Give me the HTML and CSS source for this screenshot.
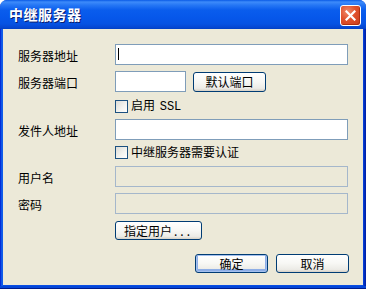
FILE: index.html
```html
<!DOCTYPE html>
<html lang="zh-CN">
<head>
<meta charset="UTF-8">
<title>中继服务器</title>
<link rel="stylesheet" href="styles.css">
</head>
<body>
<div class="window">
  <div class="titlebar">
    <span class="title">中继服务器</span>
    <button class="close" aria-label="关闭">
      <svg width="11" height="11" viewBox="0 0 11 11"><path d="M1.5 1.5 L9.5 9.5 M9.5 1.5 L1.5 9.5" stroke="#fff" stroke-width="2.2" stroke-linecap="square"/></svg>
    </button>
  </div>
  <div class="client">
    <div class="row">
      <label class="lbl">服务器地址</label>
      <div class="field wide"><span class="caret"></span></div>
    </div>
    <div class="row">
      <label class="lbl">服务器端口</label>
      <div class="field port"></div>
      <button class="btn btn-port">默认端口</button>
    </div>
    <div class="row check-row">
      <span class="box"></span><span class="check-text">启用 <span class="mono">SSL</span></span>
    </div>
    <div class="row">
      <label class="lbl">发件人地址</label>
      <div class="field wide"></div>
    </div>
    <div class="row check-row check-auth">
      <span class="box"></span><span class="check-text">中继服务器需要认证</span>
    </div>
    <div class="row">
      <label class="lbl">用户名</label>
      <div class="field wide disabled"></div>
    </div>
    <div class="row">
      <label class="lbl">密码</label>
      <div class="field wide disabled"></div>
    </div>
    <div class="row user-row">
      <button class="btn btn-user">指定用户<span class="dots">...</span></button>
    </div>
    <div class="actions">
      <button class="btn default">确定</button>
      <button class="btn">取消</button>
    </div>
  </div>
</div>
</body>
</html>
```

FILE: styles.css
```css
:root {
  --face: #ece9d8;
  --field-border: #7f9db9;
  --btn-border: #003c74;
  --ui-font: "Noto Sans CJK SC", "DejaVu Sans", sans-serif;
}
body { margin: 0; background: #fff; font-family: var(--ui-font); font-size: 12px; color: #000; }
.window {
  width: 366px; height: 289px; box-sizing: border-box;
  background: linear-gradient(90deg, #0019cf 0, #0841e0 1px, #166aee 2px, #0a4ee4 3px, #0a4ee4 calc(100% - 3px), #0030c8 calc(100% - 2px), #001ea0 100%);
  padding: 0 3px 4px 3px;
  display: flex; flex-direction: column;
  border-radius: 7px 7px 0 0;
  box-shadow: inset 0 -1px 0 #001b8c, inset 0 -3px 0 #0446d8;
}
.titlebar {
  height: 29px; margin: 0 -3px; padding: 0 5px 0 9px;
  display: flex; align-items: center; justify-content: space-between;
  border-radius: 7px 7px 0 0;
  background: linear-gradient(#0a5ae6 0, #3d8bfa 2px, #2677f5 5px, #0a5ded 10px, #0657ea 18px, #0652e2 24px, #0545cf 28px, #003fc0 29px);
}
.title { color: #fff; font-weight: bold; font-size: 14px; letter-spacing: 0.5px; text-shadow: 1px 1px 0 #0a1e6e; margin-top: -1px; }
.close {
  width: 21px; height: 21px; padding: 0; margin-top: 1px;
  border: 1px solid #fff; border-radius: 3px;
  background: radial-gradient(circle at 35% 30%, #f08a6a 0, #e0512c 45%, #c83c1c 100%);
  display: flex; align-items: center; justify-content: center;
  box-shadow: inset -1px -1px 0 #b03010;
}
.client { flex: 1; background: var(--face); padding: 15px 0 0 15px; display: flex; flex-direction: column; }
.row { display: flex; align-items: center; height: 21px; margin-bottom: 6px; }
.lbl { width: 97px; padding-top: 1px; }
.field { height: 21px; box-sizing: border-box; border: 1px solid var(--field-border); background: #fff; position: relative; }
.field.wide { width: 233px; }
.field.port { width: 71px; }
.field.disabled { background: var(--face); border-color: #a5b7cb; }
.caret { position: absolute; left: 2px; top: 3px; width: 1px; height: 12px; background: #000; }
.check-row { height: 14px; margin: 1px 0 6px 97px; }
.check-auth { margin-top: -1px; margin-bottom: 7px; }
.box {
  width: 13px; height: 13px; box-sizing: border-box;
  border: 1px solid #1c5180;
  background: linear-gradient(135deg, #dcdcd7 0, #f4f4f0 60%, #fff 100%);
  margin-right: 3px;
}
.check-text { line-height: 14px; }
.mono { font-family: "Liberation Mono", monospace; font-size: 12px; margin-left: 2px; }
.btn {
  font-family: var(--ui-font); font-size: 12px; color: #000;
  height: 19px; width: 73px; padding: 0; box-sizing: border-box;
  border: 1px solid var(--btn-border); border-radius: 3px;
  background: linear-gradient(#ffffff 0, #f7f7f4 50%, #ecebe6 85%, #d6d0c5 100%);
  line-height: 16px;
}
.btn-port { margin-left: 7px; margin-top: 1px; height: 20px; }
.user-row { margin-left: 97px; height: 19px; margin-top: 1px; margin-bottom: 14px; }
.btn-user { width: 87px; }
.dots { letter-spacing: 3px; margin-left: 2px; }
.actions { display: flex; justify-content: flex-end; gap: 8px; padding-right: 14px; }
.btn.default { box-shadow: inset 0 0 0 1px #a4c0ee, inset 0 -1px 0 2px #8eaee6; }
```
